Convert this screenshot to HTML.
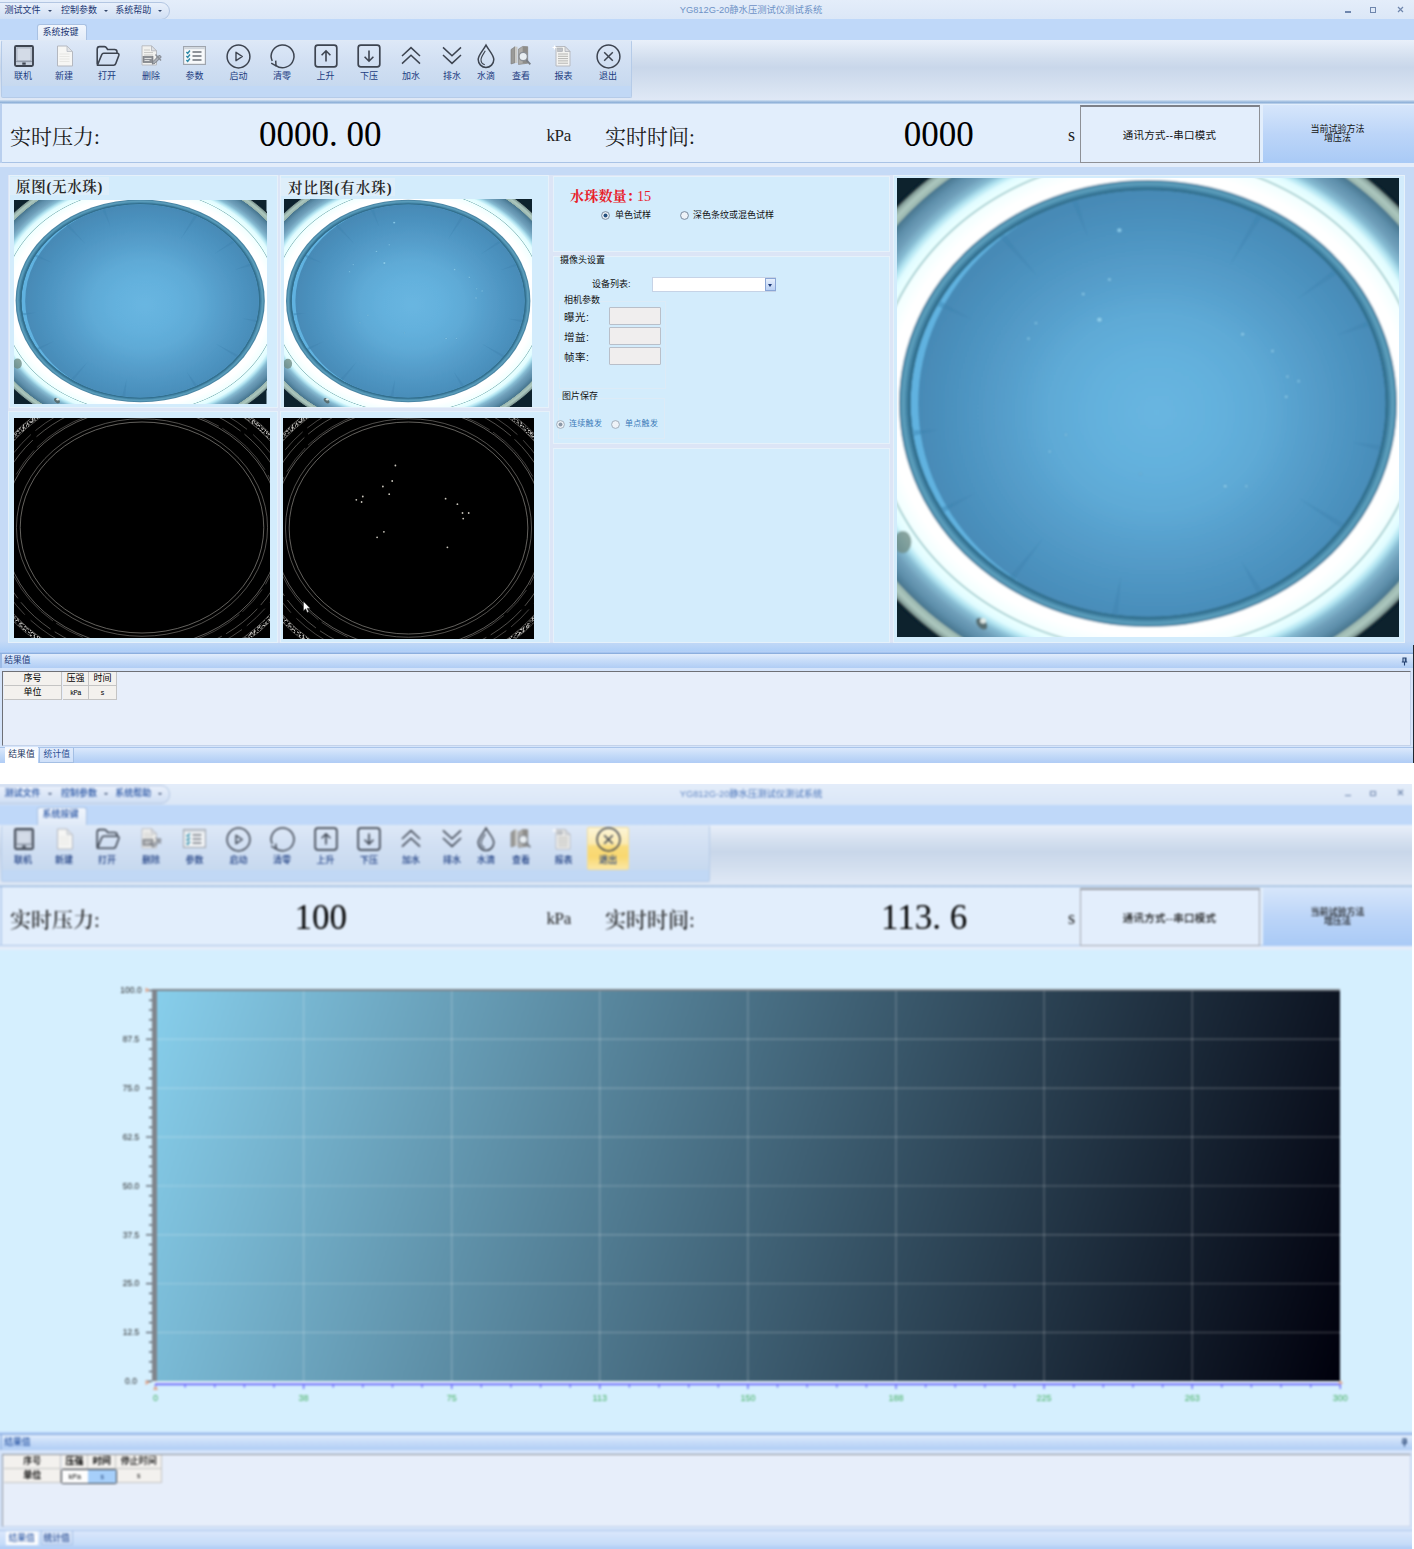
<!DOCTYPE html>
<html lang="zh"><head><meta charset="utf-8"><title>YG812G-20静水压测试仪测试系统</title>
<style>
html,body{margin:0;padding:0;background:#fff}
body{width:1414px;height:1549px;position:relative;overflow:hidden;font-family:"Liberation Sans","Noto Sans CJK SC",sans-serif;font-size:9px;color:#000}
.a{position:absolute}
.win{position:absolute;left:0;width:1414px;overflow:hidden}
.t{position:absolute;white-space:nowrap;line-height:1}
.c{transform:translateX(-50%)}
.lbl{position:absolute;white-space:nowrap;line-height:1;font-size:9px;color:#1c3c80;transform:translateX(-50%)}
.ser{font-family:"Liberation Serif","Noto Serif CJK SC",serif}
.pan{position:absolute;background:#d3ecfc;border:1px solid #e6f1fa;box-sizing:border-box}
.cell{position:absolute;box-sizing:border-box;background:#f3f1ee;border-right:1px solid #c4c4c4;border-bottom:1px solid #c4c4c4;text-align:center;line-height:13px;font-size:9px;white-space:nowrap;overflow:hidden}
svg{position:absolute;overflow:visible}
.w2 .t,.w2 .lbl,.w2 .cell{font-weight:500}
.w2 .n{font-weight:400}
</style></head><body>
<div class="win" style="top:0;height:763px">
<div class="a" style="left:-20px;top:-20px;width:1454px;height:39px;background:linear-gradient(#e4edfa 20px,#dbe7f7)"></div>
<div class="a" style="left:-12px;top:1.5px;width:180px;height:16px;border:1px solid #b3c6e2;border-radius:9px;background:linear-gradient(#e9f0fb,#d0dff4)"></div>
<div class="t" style="left:4.5px;top:5.8px;font-size:9px;color:#1a3572">测试文件</div>
<div class="t" style="left:61px;top:5.8px;font-size:9px;color:#1a3572">控制参数</div>
<div class="t" style="left:115.3px;top:5.8px;font-size:9px;color:#1a3572">系统帮助</div>
<div class="a" style="left:47.5px;top:9.8px;width:0;height:0;border-left:2.2px solid transparent;border-right:2.2px solid transparent;border-top:2.5px solid #33466b"></div>
<div class="a" style="left:103.5px;top:9.8px;width:0;height:0;border-left:2.2px solid transparent;border-right:2.2px solid transparent;border-top:2.5px solid #33466b"></div>
<div class="a" style="left:158px;top:9.8px;width:0;height:0;border-left:2.2px solid transparent;border-right:2.2px solid transparent;border-top:2.5px solid #33466b"></div>
<div class="t c" style="left:751px;top:6.3px;font-size:9.3px;color:#6e92c6">YG812G-20静水压测试仪测试系统</div>
<div class="a" style="left:1345px;top:11.3px;width:5.5px;height:1.5px;background:#6f86ad"></div>
<div class="a" style="left:1370px;top:7.3px;width:4px;height:3.5px;border:1px solid #6f86ad;border-top-width:1.5px"></div>
<svg style="left:1396.500px;top:6.1px" width="7" height="7" viewBox="0 0 7 7"><path d="M1 1l5 5M6 1L1 6" stroke="#6f86ad" stroke-width="1.200"/></svg>
<div class="a" style="left:-20px;top:19px;width:1454px;height:22px;background:#bfd8f9"></div>
<div class="a" style="left:37px;top:24px;width:50px;height:17px;box-sizing:border-box;border:1px solid #a9c1e2;border-bottom:none;border-radius:3px 3px 0 0;background:linear-gradient(#f1f6fd,#e0eaf8)"></div>
<div class="t c" style="left:60.5px;top:27.5px;font-size:9px;color:#1a3572">系统按键</div>
<div class="a" style="left:-20px;top:40px;width:1454px;height:61px;background:linear-gradient(#e9f0fa 0%,#d2deee 30%,#c9d7ea 45%,#d3dfef 70%,#e0e9f6 100%)"></div>
<div class="a" style="left:1px;top:40px;width:631px;height:58px;box-sizing:border-box;border:1px solid #b5cbe8;border-top-color:#dfe9f6;border-radius:2px;background:linear-gradient(#dde8f7 0%,#d2e0f3 35%,#c7d9ef 80%,#c1d8f5 81%,#c1d8f5 100%)"></div>
<svg style="left:13.800px;top:45.3px" width="20" height="22" viewBox="0 0 20 22"><rect x="1" y="1" width="18" height="20" rx="1.200" fill="#c5cfdd" stroke="#3d4450" stroke-width="1.900"/><rect x="3" y="3" width="14" height="12.800" fill="#d3dbe7" stroke="#8a93a3" stroke-width=".5"/><path d="M2 16.600h16" stroke="#7c8595" stroke-width=".8"/><rect x="8.300" y="17.500" width="3.400" height="2.200" fill="#3d4450"/></svg>
<svg style="left:56.3px;top:45px" width="18" height="22" viewBox="0 0 18 22"><path d="M1.5 1h9.5l5.5 5.5V21h-15z" fill="#f6f6f4" stroke="#b4b8c0" stroke-width="1"/><path d="M11 1v5.5h5.5z" fill="#e2e4e8" stroke="#b8bcc4" stroke-width=".8"/><path d="M3.5 9h10M3.5 11.5h10M3.5 14h10M3.5 16.5h10" stroke="#e3e3e0" stroke-width=".8"/></svg>
<svg style="left:95px;top:45px" width="26" height="22" viewBox="0 0 26 22"><path d="M2.2 19.5V4.2c0-1.6.9-2.6 2.4-2.6h4.8c1.2 0 1.7.5 2.4 1.6l.8 1.3h7c1.5 0 2.4.9 2.4 2.3v1.6" fill="none" stroke="#3d4450" stroke-width="1.6"/><path d="M2.4 20.3l4.3-10.6c.4-1 1-1.4 2-1.4h13.6c1.4 0 1.9.9 1.5 2.1l-3 8.2c-.4 1.2-1 1.7-2.2 1.7z" fill="none" stroke="#3d4450" stroke-width="1.6" stroke-linejoin="round"/></svg>
<svg style="left:141px;top:45px" width="21" height="21" viewBox="0 0 21 21"><path d="M1 .8h9.5l5 5V20H1z" fill="#f1f1ef" stroke="#b9bcc2" stroke-width="1"/><path d="M10.5 .8v5h5z" fill="#dfe1e5" stroke="#b0b4bb" stroke-width=".8"/><path d="M3 5h6M3 7.5h9M3 10h9" stroke="#c8c8c6" stroke-width="1"/><rect x="2" y="11.5" width="10" height="6" fill="#8c8f95" stroke="#6d7076" stroke-width=".6"/><path d="M3.5 13.5h7M3.5 15.5h5" stroke="#e6e6e6" stroke-width=".9"/><path d="M12 16.5l6.5-6.5 1.8 2-6.3 6.3-2.8.8z" fill="#a9aeb6" stroke="#6f747c" stroke-width=".8"/><path d="M14.5 9.5l5.5 6" stroke="#8b9098" stroke-width="1.4"/></svg>
<svg style="left:183px;top:46px" width="23" height="19" viewBox="0 0 23 19"><rect x=".6" y=".6" width="21.8" height="17.8" fill="#f7f9fb" stroke="#9fa5ae" stroke-width="1.2"/><rect x="1.2" y="1.2" width="20.6" height="2" fill="#cfd5dd"/><path d="M3.4 6l1.3 1.4 2.2-2.9M3.4 10l1.3 1.4 2.2-2.9M3.4 14l1.3 1.4 2.2-2.9" fill="none" stroke="#2f8aa8" stroke-width="1.5"/><path d="M9.5 6h9M9.5 10h9M9.5 14h9" stroke="#6c727b" stroke-width="1.3"/></svg>
<svg style="left:226px;top:43.5px" width="25" height="25" viewBox="0 0 25 25"><circle cx="12.5" cy="12.5" r="11.4" fill="none" stroke="#3d4450" stroke-width="1.5"/><path d="M10 8.3l6.3 4.2-6.3 4.2z" fill="none" stroke="#3d4450" stroke-width="1.4" stroke-linejoin="round"/></svg>
<svg style="left:269.5px;top:43.5px" width="25" height="25" viewBox="0 0 25 25"><path d="M5.6 21.3A11.4 11.4 0 1 0 2.2 17" fill="none" stroke="#3d4450" stroke-width="1.5"/><path d="M1.2 19.2l4.8 2.6-.3-5.2" fill="none" stroke="#3d4450" stroke-width="1.5" stroke-linejoin="round"/></svg>
<svg style="left:313.5px;top:44px" width="24" height="24" viewBox="0 0 24 24"><rect x="1.2" y="1.2" width="21.6" height="21.6" rx="2.6" fill="none" stroke="#3d4450" stroke-width="1.7"/><path d="M12 17.5V7M7.6 11.2L12 6.8l4.4 4.4" fill="none" stroke="#3d4450" stroke-width="1.6"/></svg>
<svg style="left:357px;top:44px" width="24" height="24" viewBox="0 0 24 24"><rect x="1.2" y="1.2" width="21.6" height="21.6" rx="2.6" fill="none" stroke="#3d4450" stroke-width="1.7"/><path d="M12 6.5V17M7.6 12.8L12 17.2l4.4-4.4" fill="none" stroke="#3d4450" stroke-width="1.6"/></svg>
<svg style="left:401px;top:46px" width="20" height="19" viewBox="0 0 20 19"><path d="M1 10L10 1.6 19 10M1 17.6L10 9.2l9 8.4" fill="none" stroke="#3d4450" stroke-width="1.5"/></svg>
<svg style="left:442px;top:46px" width="20" height="19" viewBox="0 0 20 19"><path d="M1 1.4L10 9.8 19 1.4M1 9L10 17.4 19 9" fill="none" stroke="#3d4450" stroke-width="1.5"/></svg>
<svg style="left:477px;top:44px" width="18" height="24" viewBox="0 0 18 24"><path d="M9 1.2C6.2 6.4 1.2 11 1.2 15.6a7.8 7.8 0 0 0 15.6 0C16.800 11 11.8 6.400 9 1.200z" fill="none" stroke="#3d4450" stroke-width="1.5"/><path d="M8.300 6.800C6.300 10.200 4 12.900 4 15.800c0 2.500 1.500 4.400 3.800 5" fill="none" stroke="#3d4450" stroke-width="1.100"/></svg>
<svg style="left:510px;top:44.5px" width="22" height="22" viewBox="0 0 22 22"><path d="M1 4.500l4-2.800v16l-4 1.300z" fill="#9a9a98" stroke="#7b7b79" stroke-width=".6"/><path d="M5 1.700h2.500v16.300H5z" fill="#c9c9c6"/><path d="M8.500 4l4.200-2.600 5 .3v16.500l-9.200 1.300z" fill="#aeadaa" stroke="#80807d" stroke-width=".6"/><path d="M12.700 1.400l5 .3v16.500h-5z" fill="#8d8c89"/><circle cx="13.200" cy="11.500" r="4.200" fill="#e8eef2" stroke="#8a8f96" stroke-width="1.300"/><path d="M16.300 14.800l4 4.500" stroke="#777c84" stroke-width="1.800"/></svg>
<svg style="left:553px;top:45px" width="19" height="22" viewBox="0 0 19 22"><path d="M3 1.500h9l5 5V21H3z" fill="#f3f3f1" stroke="#b7bac0" stroke-width="1"/><path d="M12 1.500v5h5z" fill="#dcdee2" stroke="#aeb2b9" stroke-width=".8"/><rect x="4.600" y="3" width="5" height="3.600" fill="#bfc2c7" stroke="#9fa3a9" stroke-width=".5"/><path d="M5 9h10M5 11.300h10M5 13.600h10M5 15.900h10M5 18.200h10" stroke="#b4b4b1" stroke-width="1"/><path d="M1.500 .5v4M-.5 2.500h4" stroke="#fff" stroke-width="1.200"/></svg>
<svg style="left:595.5px;top:43.5px" width="25" height="25" viewBox="0 0 25 25"><circle cx="12.500" cy="12.500" r="11.400" fill="none" stroke="#3d4450" stroke-width="1.500"/><path d="M8.200 8.200l8.600 8.600M16.800 8.200l-8.600 8.600" stroke="#3d4450" stroke-width="1.500"/></svg>
<div class="lbl" style="left:23px;top:71.5px">联机</div>
<div class="lbl" style="left:64px;top:71.5px">新建</div>
<div class="lbl" style="left:107px;top:71.5px">打开</div>
<div class="lbl" style="left:151px;top:71.5px">删除</div>
<div class="lbl" style="left:194.5px;top:71.5px">参数</div>
<div class="lbl" style="left:238.5px;top:71.5px">启动</div>
<div class="lbl" style="left:282px;top:71.5px">清零</div>
<div class="lbl" style="left:325.5px;top:71.5px">上升</div>
<div class="lbl" style="left:369px;top:71.5px">下压</div>
<div class="lbl" style="left:411px;top:71.5px">加水</div>
<div class="lbl" style="left:452px;top:71.5px">排水</div>
<div class="lbl" style="left:486px;top:71.5px">水滴</div>
<div class="lbl" style="left:521px;top:71.5px">查看</div>
<div class="lbl" style="left:563.5px;top:71.5px">报表</div>
<div class="lbl" style="left:608px;top:71.5px">退出</div>
<div class="a" style="left:-20px;top:100px;width:1454px;height:4px;background:linear-gradient(#d0e0f2,#8fb1d8 60%,#c5d8ef)"></div>
<div class="a" style="left:-20px;top:104px;width:1454px;height:59px;background:#e2eefc;border-bottom:1px solid #a9c3e6;box-sizing:border-box"></div><div class="a" style="left:0;top:104px;width:2px;height:59px;background:#b9cfee"></div>
<div class="t ser" style="left:10px;top:126.5px;font-size:21px;color:#1a1a1a">实时压力:</div>
<div class="t ser" style="left:259px;top:116.5px;font-size:35px;color:#000">0000<span style="display:inline-block;width:17.500px">.</span>00</div>
<div class="t ser" style="left:546.500px;top:127px;font-size:17px;letter-spacing:-.400px;color:#222">kPa</div>
<div class="t ser" style="left:605px;top:126.5px;font-size:21px;color:#1a1a1a">实时时间:</div>
<div class="t ser" style="left:903.7px;top:116.5px;font-size:35px;color:#000">0000</div>
<div class="t ser" style="left:1068px;top:126.3px;font-size:18px;color:#222">s</div>
<div class="a" style="left:1080px;top:105px;width:180px;height:58px;box-sizing:border-box;border:1px solid #8e9096;border-top:2px solid #7d8088;background:#e3eefc"></div>
<div class="t c" style="left:1169.5px;top:129.5px;font-size:10.500px;letter-spacing:.250px;color:#111">通讯方式--串口模式</div>
<div class="a" style="left:1263px;top:105px;width:151px;height:58px;background:linear-gradient(#d6e6fb,#bcd5f8 50%,#a9caf6)"></div>
<div class="t c" style="left:1337.500px;top:125px;font-size:9px;color:#111;text-align:center;line-height:9px">当前试验方法<br>增压法</div>
<div class="a" style="left:0;top:163px;width:1414px;height:4px;background:#e4edfa;border-bottom:1px solid #a4bde0"></div>
<div class="a" style="left:0;top:167px;width:1414px;height:484px;background:linear-gradient(#c5daf6 0,#c5daf6 474px,#aecff8 484px)"></div>
<div class="a" style="left:8px;top:175px;width:1397px;height:468px;background:#dce5f6"></div>
<div class="pan" style="left:9px;top:175px;width:269px;height:233px"></div>
<div class="pan" style="left:280px;top:175px;width:269px;height:233px"></div>
<div class="pan" style="left:8px;top:411px;width:270px;height:232px"></div>
<div class="pan" style="left:280px;top:411px;width:270px;height:232px"></div>
<div class="pan" style="left:553px;top:176px;width:337px;height:76px"></div>
<div class="pan" style="left:553px;top:256px;width:337px;height:188px"></div>
<div class="pan" style="left:553px;top:448px;width:337px;height:195px"></div>
<div class="pan" style="left:893px;top:175px;width:512px;height:468px"></div>
<div class="a" style="left:10px;top:177px;width:99px;height:18px;background:#deeefa"></div>
<div class="t ser" style="left:16px;top:179.500px;font-size:14.500px;letter-spacing:.700px;font-weight:600;color:#262626">原图(无水珠)</div>
<div class="a" style="left:281px;top:178px;width:114px;height:18px;background:#deeefa"></div>
<div class="t ser" style="left:288px;top:180.500px;font-size:14.500px;letter-spacing:1px;font-weight:600;color:#262626">对比图(有水珠)</div>
<svg style="left:14px;top:200px;overflow:hidden" width="252.5" height="204" viewBox="0 0 252.5 204">
<defs>
<radialGradient id="gp1" cx=".5" cy=".52" r=".5"><stop offset="0" stop-color="#68b6e1"/><stop offset=".25" stop-color="#64b1dd"/><stop offset=".45" stop-color="#5eaad6"/><stop offset=".65" stop-color="#559dca"/><stop offset=".85" stop-color="#4c92bf"/><stop offset="1" stop-color="#478ab6"/></radialGradient>
<radialGradient id="mp1" cx=".5" cy=".5" r=".5"><stop offset="0.7361" stop-color="#ffffff"/><stop offset="0.7732" stop-color="#ffffff"/><stop offset="0.8164" stop-color="#f1ffff"/><stop offset="0.8208" stop-color="#8fbfc2"/><stop offset="0.8253" stop-color="#eaffff"/><stop offset="0.8476" stop-color="#e0fcff"/><stop offset="0.8639" stop-color="#b2e4f1"/><stop offset="0.8810" stop-color="#86bbd2"/><stop offset="0.9033" stop-color="#6f9fba"/><stop offset="0.9294" stop-color="#5d8eaa"/><stop offset="0.9539" stop-color="#48768f"/><stop offset="0.9569" stop-color="#9ab6ae"/><stop offset="0.9740" stop-color="#adc8bf"/><stop offset="0.9896" stop-color="#819b96"/><stop offset="0.9941" stop-color="#1b2c36"/><stop offset="1.0000" stop-color="#0d222d"/></radialGradient>
<filter id="bp1" x="-5%" y="-5%" width="110%" height="110%"><feGaussianBlur stdDeviation="0.45"/></filter>
</defs>
<rect width="252.5" height="204" fill="#0d222d"/>
<g filter="url(#bp1)"><g transform="translate(126.2 100.85) scale(124.6 101.3)">
<circle r="1.345" fill="url(#mp1)"/>
<ellipse cx="-.985" cy=".62" rx=".035" ry=".05" fill="#6f8c86" fill-opacity=".8"/>
<ellipse cx="-.668" cy=".985" rx=".018" ry=".03" fill="#596e72" transform="rotate(-35 -.668 .985)"/>
<circle cx="-.662" cy=".972" r=".012" fill="#dfe9e6"/>
<circle r="1" fill="#4a86a5"/>
<circle r=".990" fill="#5a9cba"/>
<circle r=".976" fill="#4688a9"/>
<circle r=".966" fill="#33708f"/>
<clipPath id="dp1"><circle r=".953"/></clipPath>
<g clip-path="url(#dp1)"><circle r=".953" fill="#60b2e0"/><ellipse cx=".035" cy="0" rx=".958" ry=".975" fill="url(#gp1)"/></g>
<path d="M-0.833 -0.457L-0.706 -0.376L-0.844 -0.435z" fill="#3f83b0" fill-opacity=".45"/>
<path d="M-0.575 -0.756L-0.443 -0.567L-0.594 -0.741z" fill="#3f83b0" fill-opacity=".45"/>
<path d="M-0.282 -0.907L-0.241 -0.742L-0.305 -0.900z" fill="#3f83b0" fill-opacity=".45"/>
<path d="M0.457 -0.833L0.329 -0.618L0.435 -0.844z" fill="#3f83b0" fill-opacity=".45"/>
<path d="M0.756 -0.575L0.599 -0.468L0.741 -0.594z" fill="#3f83b0" fill-opacity=".45"/>
<path d="M0.885 -0.345L0.760 -0.307L0.876 -0.367z" fill="#3f83b0" fill-opacity=".45"/>
<path d="M0.927 0.209L0.822 0.175L0.932 0.186z" fill="#3f83b0" fill-opacity=".45"/>
<path d="M0.771 0.555L0.606 0.424L0.785 0.535z" fill="#3f83b0" fill-opacity=".45"/>
<path d="M0.435 0.844L0.376 0.706L0.457 0.833z" fill="#3f83b0" fill-opacity=".45"/>
<path d="M-0.144 0.939L-0.109 0.772L-0.120 0.942z" fill="#3f83b0" fill-opacity=".45"/>
<path d="M-0.555 0.771L-0.424 0.606L-0.535 0.785z" fill="#3f83b0" fill-opacity=".45"/>
<path d="M-0.829 0.465L-0.693 0.400L-0.817 0.485z" fill="#3f83b0" fill-opacity=".45"/>
<path d="M-0.942 0.120L-0.842 0.118L-0.939 0.144z" fill="#3f83b0" fill-opacity=".45"/>
</g></g></svg>
<svg style="left:284px;top:199px;overflow:hidden" width="248" height="208" viewBox="0 0 248 208">
<defs>
<radialGradient id="gp2" cx=".5" cy=".52" r=".5"><stop offset="0" stop-color="#68b6e1"/><stop offset=".25" stop-color="#64b1dd"/><stop offset=".45" stop-color="#5eaad6"/><stop offset=".65" stop-color="#559dca"/><stop offset=".85" stop-color="#4c92bf"/><stop offset="1" stop-color="#478ab6"/></radialGradient>
<radialGradient id="mp2" cx=".5" cy=".5" r=".5"><stop offset="0.7361" stop-color="#ffffff"/><stop offset="0.7732" stop-color="#ffffff"/><stop offset="0.8164" stop-color="#f1ffff"/><stop offset="0.8208" stop-color="#8fbfc2"/><stop offset="0.8253" stop-color="#eaffff"/><stop offset="0.8476" stop-color="#e0fcff"/><stop offset="0.8639" stop-color="#b2e4f1"/><stop offset="0.8810" stop-color="#86bbd2"/><stop offset="0.9033" stop-color="#6f9fba"/><stop offset="0.9294" stop-color="#5d8eaa"/><stop offset="0.9539" stop-color="#48768f"/><stop offset="0.9569" stop-color="#9ab6ae"/><stop offset="0.9740" stop-color="#adc8bf"/><stop offset="0.9896" stop-color="#819b96"/><stop offset="0.9941" stop-color="#1b2c36"/><stop offset="1.0000" stop-color="#0d222d"/></radialGradient>
<filter id="bp2" x="-5%" y="-5%" width="110%" height="110%"><feGaussianBlur stdDeviation="0.45"/></filter>
</defs>
<rect width="248" height="208" fill="#0d222d"/>
<g filter="url(#bp2)"><g transform="translate(124.2 102) scale(122.2 101.2)">
<circle r="1.345" fill="url(#mp2)"/>
<ellipse cx="-.985" cy=".62" rx=".035" ry=".05" fill="#6f8c86" fill-opacity=".8"/>
<ellipse cx="-.668" cy=".985" rx=".018" ry=".03" fill="#596e72" transform="rotate(-35 -.668 .985)"/>
<circle cx="-.662" cy=".972" r=".012" fill="#dfe9e6"/>
<circle r="1" fill="#4a86a5"/>
<circle r=".990" fill="#5a9cba"/>
<circle r=".976" fill="#4688a9"/>
<circle r=".966" fill="#33708f"/>
<clipPath id="dp2"><circle r=".953"/></clipPath>
<g clip-path="url(#dp2)"><circle r=".953" fill="#60b2e0"/><ellipse cx=".035" cy="0" rx=".958" ry=".975" fill="url(#gp2)"/></g>
<path d="M-0.833 -0.457L-0.706 -0.376L-0.844 -0.435z" fill="#3f83b0" fill-opacity=".45"/>
<path d="M-0.575 -0.756L-0.443 -0.567L-0.594 -0.741z" fill="#3f83b0" fill-opacity=".45"/>
<path d="M-0.282 -0.907L-0.241 -0.742L-0.305 -0.900z" fill="#3f83b0" fill-opacity=".45"/>
<path d="M0.457 -0.833L0.329 -0.618L0.435 -0.844z" fill="#3f83b0" fill-opacity=".45"/>
<path d="M0.756 -0.575L0.599 -0.468L0.741 -0.594z" fill="#3f83b0" fill-opacity=".45"/>
<path d="M0.885 -0.345L0.760 -0.307L0.876 -0.367z" fill="#3f83b0" fill-opacity=".45"/>
<path d="M0.927 0.209L0.822 0.175L0.932 0.186z" fill="#3f83b0" fill-opacity=".45"/>
<path d="M0.771 0.555L0.606 0.424L0.785 0.535z" fill="#3f83b0" fill-opacity=".45"/>
<path d="M0.435 0.844L0.376 0.706L0.457 0.833z" fill="#3f83b0" fill-opacity=".45"/>
<path d="M-0.144 0.939L-0.109 0.772L-0.120 0.942z" fill="#3f83b0" fill-opacity=".45"/>
<path d="M-0.555 0.771L-0.424 0.606L-0.535 0.785z" fill="#3f83b0" fill-opacity=".45"/>
<path d="M-0.829 0.465L-0.693 0.400L-0.817 0.485z" fill="#3f83b0" fill-opacity=".45"/>
<path d="M-0.942 0.120L-0.842 0.118L-0.939 0.144z" fill="#3f83b0" fill-opacity=".45"/>
<circle cx="-0.115" cy="-0.775" r="0.009" fill="#8fd0ee" stroke="#4e95c0" stroke-width=".003"/>
<circle cx="-0.155" cy="-0.555" r="0.007" fill="#8fd0ee" stroke="#4e95c0" stroke-width=".003"/>
<circle cx="-0.26" cy="-0.49" r="0.007" fill="#8fd0ee" stroke="#4e95c0" stroke-width=".003"/>
<circle cx="-0.195" cy="-0.375" r="0.011" fill="#8fd0ee" stroke="#4e95c0" stroke-width=".003"/>
<circle cx="-0.45" cy="-0.36" r="0.006" fill="#8fd0ee" stroke="#4e95c0" stroke-width=".003"/>
<circle cx="-0.48" cy="-0.29" r="0.006" fill="#8fd0ee" stroke="#4e95c0" stroke-width=".003"/>
<circle cx="0.38" cy="-0.31" r="0.008" fill="#8fd0ee" stroke="#4e95c0" stroke-width=".003"/>
<circle cx="0.5" cy="-0.235" r="0.007" fill="#8fd0ee" stroke="#4e95c0" stroke-width=".003"/>
<circle cx="0.56" cy="-0.12" r="0.006" fill="#8fd0ee" stroke="#4e95c0" stroke-width=".003"/>
<circle cx="0.605" cy="-0.1" r="0.006" fill="#8fd0ee" stroke="#4e95c0" stroke-width=".003"/>
<circle cx="0.555" cy="-0.03" r="0.007" fill="#8fd0ee" stroke="#4e95c0" stroke-width=".003"/>
<circle cx="-0.33" cy="0.14" r="0.006" fill="#8fd0ee" stroke="#4e95c0" stroke-width=".003"/>
<circle cx="-0.395" cy="0.215" r="0.006" fill="#8fd0ee" stroke="#4e95c0" stroke-width=".003"/>
<circle cx="-0.03" cy="0.315" r="0.005" fill="#8fd0ee" stroke="#4e95c0" stroke-width=".003"/>
<circle cx="0.31" cy="0.37" r="0.008" fill="#8fd0ee" stroke="#4e95c0" stroke-width=".003"/>
<circle cx="0.395" cy="0.37" r="0.006" fill="#8fd0ee" stroke="#4e95c0" stroke-width=".003"/>
</g></g></svg>
<svg style="left:897px;top:178px;overflow:hidden" width="502" height="459" viewBox="0 0 502 459">
<defs>
<radialGradient id="gp3" cx=".5" cy=".52" r=".5"><stop offset="0" stop-color="#68b6e1"/><stop offset=".25" stop-color="#64b1dd"/><stop offset=".45" stop-color="#5eaad6"/><stop offset=".65" stop-color="#559dca"/><stop offset=".85" stop-color="#4c92bf"/><stop offset="1" stop-color="#478ab6"/></radialGradient>
<radialGradient id="mp3" cx=".5" cy=".5" r=".5"><stop offset="0.7361" stop-color="#ffffff"/><stop offset="0.7732" stop-color="#ffffff"/><stop offset="0.8164" stop-color="#f1ffff"/><stop offset="0.8208" stop-color="#8fbfc2"/><stop offset="0.8253" stop-color="#eaffff"/><stop offset="0.8476" stop-color="#e0fcff"/><stop offset="0.8639" stop-color="#b2e4f1"/><stop offset="0.8810" stop-color="#86bbd2"/><stop offset="0.9033" stop-color="#6f9fba"/><stop offset="0.9294" stop-color="#5d8eaa"/><stop offset="0.9539" stop-color="#48768f"/><stop offset="0.9569" stop-color="#9ab6ae"/><stop offset="0.9740" stop-color="#adc8bf"/><stop offset="0.9896" stop-color="#819b96"/><stop offset="0.9941" stop-color="#1b2c36"/><stop offset="1.0000" stop-color="#0d222d"/></radialGradient>
<filter id="bp3" x="-5%" y="-5%" width="110%" height="110%"><feGaussianBlur stdDeviation="0.8"/></filter>
</defs>
<rect width="502" height="459" fill="#0d222d"/>
<g filter="url(#bp3)"><g transform="translate(251 225.5) scale(249 223.5)">
<circle r="1.345" fill="url(#mp3)"/>
<ellipse cx="-.985" cy=".62" rx=".035" ry=".05" fill="#6f8c86" fill-opacity=".8"/>
<ellipse cx="-.668" cy=".985" rx=".018" ry=".03" fill="#596e72" transform="rotate(-35 -.668 .985)"/>
<circle cx="-.662" cy=".972" r=".012" fill="#dfe9e6"/>
<circle r="1" fill="#4a86a5"/>
<circle r=".990" fill="#5a9cba"/>
<circle r=".976" fill="#4688a9"/>
<circle r=".966" fill="#33708f"/>
<clipPath id="dp3"><circle r=".953"/></clipPath>
<g clip-path="url(#dp3)"><circle r=".953" fill="#60b2e0"/><ellipse cx=".035" cy="0" rx=".958" ry=".975" fill="url(#gp3)"/></g>
<path d="M-0.833 -0.457L-0.706 -0.376L-0.844 -0.435z" fill="#3f83b0" fill-opacity=".45"/>
<path d="M-0.575 -0.756L-0.443 -0.567L-0.594 -0.741z" fill="#3f83b0" fill-opacity=".45"/>
<path d="M-0.282 -0.907L-0.241 -0.742L-0.305 -0.900z" fill="#3f83b0" fill-opacity=".45"/>
<path d="M0.457 -0.833L0.329 -0.618L0.435 -0.844z" fill="#3f83b0" fill-opacity=".45"/>
<path d="M0.756 -0.575L0.599 -0.468L0.741 -0.594z" fill="#3f83b0" fill-opacity=".45"/>
<path d="M0.885 -0.345L0.760 -0.307L0.876 -0.367z" fill="#3f83b0" fill-opacity=".45"/>
<path d="M0.927 0.209L0.822 0.175L0.932 0.186z" fill="#3f83b0" fill-opacity=".45"/>
<path d="M0.771 0.555L0.606 0.424L0.785 0.535z" fill="#3f83b0" fill-opacity=".45"/>
<path d="M0.435 0.844L0.376 0.706L0.457 0.833z" fill="#3f83b0" fill-opacity=".45"/>
<path d="M-0.144 0.939L-0.109 0.772L-0.120 0.942z" fill="#3f83b0" fill-opacity=".45"/>
<path d="M-0.555 0.771L-0.424 0.606L-0.535 0.785z" fill="#3f83b0" fill-opacity=".45"/>
<path d="M-0.829 0.465L-0.693 0.400L-0.817 0.485z" fill="#3f83b0" fill-opacity=".45"/>
<path d="M-0.942 0.120L-0.842 0.118L-0.939 0.144z" fill="#3f83b0" fill-opacity=".45"/>
<circle cx="-0.115" cy="-0.775" r="0.009" fill="#8fd0ee" stroke="#4e95c0" stroke-width=".003"/>
<circle cx="-0.155" cy="-0.555" r="0.007" fill="#8fd0ee" stroke="#4e95c0" stroke-width=".003"/>
<circle cx="-0.26" cy="-0.49" r="0.007" fill="#8fd0ee" stroke="#4e95c0" stroke-width=".003"/>
<circle cx="-0.195" cy="-0.375" r="0.011" fill="#8fd0ee" stroke="#4e95c0" stroke-width=".003"/>
<circle cx="-0.45" cy="-0.36" r="0.006" fill="#8fd0ee" stroke="#4e95c0" stroke-width=".003"/>
<circle cx="-0.48" cy="-0.29" r="0.006" fill="#8fd0ee" stroke="#4e95c0" stroke-width=".003"/>
<circle cx="0.38" cy="-0.31" r="0.008" fill="#8fd0ee" stroke="#4e95c0" stroke-width=".003"/>
<circle cx="0.5" cy="-0.235" r="0.007" fill="#8fd0ee" stroke="#4e95c0" stroke-width=".003"/>
<circle cx="0.56" cy="-0.12" r="0.006" fill="#8fd0ee" stroke="#4e95c0" stroke-width=".003"/>
<circle cx="0.605" cy="-0.1" r="0.006" fill="#8fd0ee" stroke="#4e95c0" stroke-width=".003"/>
<circle cx="0.555" cy="-0.03" r="0.007" fill="#8fd0ee" stroke="#4e95c0" stroke-width=".003"/>
<circle cx="-0.33" cy="0.14" r="0.006" fill="#8fd0ee" stroke="#4e95c0" stroke-width=".003"/>
<circle cx="-0.395" cy="0.215" r="0.006" fill="#8fd0ee" stroke="#4e95c0" stroke-width=".003"/>
<circle cx="-0.03" cy="0.315" r="0.005" fill="#8fd0ee" stroke="#4e95c0" stroke-width=".003"/>
<circle cx="0.31" cy="0.37" r="0.008" fill="#8fd0ee" stroke="#4e95c0" stroke-width=".003"/>
<circle cx="0.395" cy="0.37" r="0.006" fill="#8fd0ee" stroke="#4e95c0" stroke-width=".003"/>
</g></g></svg>
<svg style="left:14px;top:418px;overflow:hidden" width="256" height="220" viewBox="0 0 256 220">
<defs><filter id="ne1" x="0" y="0" width="100%" height="100%"><feTurbulence type="fractalNoise" baseFrequency=".55" numOctaves="2" seed="7"/><feColorMatrix values="0 0 0 0 .50  0 0 0 0 .49  0 0 0 0 .47  2.6 2.6 0 0 -2.3"/></filter>
<clipPath id="ce1"><path clip-rule="evenodd" d="M-1.335 0a1.335 1.335 0 1 0 2.67 0a1.335 1.335 0 1 0 -2.67 0zM-1.292 0a1.292 1.292 0 1 0 2.584 0a1.292 1.292 0 1 0 -2.584 0z" transform="translate(128.0 109.5) scale(125.8 109.0)"/></clipPath></defs>
<rect width="256" height="220" fill="#000"/>
<g clip-path="url(#ce1)"><rect width="256" height="220" filter="url(#ne1)"/></g>
<g transform="translate(128.0 109.5) scale(125.8 109.0)" fill="none" stroke="#8a8782" stroke-width=".85">
<circle r="0.968" stroke-opacity="0.85" vector-effect="non-scaling-stroke"/>
<circle r="0.998" stroke-opacity="0.7" vector-effect="non-scaling-stroke"/>
<circle r="1.098" stroke-opacity="0.8" vector-effect="non-scaling-stroke"/>
<circle r="1.112" stroke-opacity="0.55" vector-effect="non-scaling-stroke" stroke-dasharray="60 6 30 4"/>
<circle r="1.182" stroke-opacity="0.7" vector-effect="non-scaling-stroke" stroke-dasharray="40 5"/>
<circle r="1.228" stroke-opacity="0.6" vector-effect="non-scaling-stroke" stroke-dasharray="25 6 50 8"/>
<circle r="1.292" stroke-opacity="0.6" vector-effect="non-scaling-stroke"/>
<circle r="1.336" stroke-opacity="0.5" vector-effect="non-scaling-stroke"/>
</g>
</svg>
<svg style="left:283px;top:418px;overflow:hidden" width="251" height="221" viewBox="0 0 251 221">
<defs><filter id="ne2" x="0" y="0" width="100%" height="100%"><feTurbulence type="fractalNoise" baseFrequency=".55" numOctaves="2" seed="7"/><feColorMatrix values="0 0 0 0 .50  0 0 0 0 .49  0 0 0 0 .47  2.6 2.6 0 0 -2.3"/></filter>
<clipPath id="ce2"><path clip-rule="evenodd" d="M-1.335 0a1.335 1.335 0 1 0 2.67 0a1.335 1.335 0 1 0 -2.67 0zM-1.292 0a1.292 1.292 0 1 0 2.584 0a1.292 1.292 0 1 0 -2.584 0z" transform="translate(125.5 110.0) scale(123.3 109.5)"/></clipPath></defs>
<rect width="251" height="221" fill="#000"/>
<g clip-path="url(#ce2)"><rect width="251" height="221" filter="url(#ne2)"/></g>
<g transform="translate(125.5 110.0) scale(123.3 109.5)" fill="none" stroke="#8a8782" stroke-width=".85">
<circle r="0.968" stroke-opacity="0.85" vector-effect="non-scaling-stroke"/>
<circle r="0.998" stroke-opacity="0.7" vector-effect="non-scaling-stroke"/>
<circle r="1.098" stroke-opacity="0.8" vector-effect="non-scaling-stroke"/>
<circle r="1.112" stroke-opacity="0.55" vector-effect="non-scaling-stroke" stroke-dasharray="60 6 30 4"/>
<circle r="1.182" stroke-opacity="0.7" vector-effect="non-scaling-stroke" stroke-dasharray="40 5"/>
<circle r="1.228" stroke-opacity="0.6" vector-effect="non-scaling-stroke" stroke-dasharray="25 6 50 8"/>
<circle r="1.292" stroke-opacity="0.6" vector-effect="non-scaling-stroke"/>
<circle r="1.336" stroke-opacity="0.5" vector-effect="non-scaling-stroke"/>
</g>
<circle cx="112.4" cy="47.5" r=".9" fill="#c9c5bb"/>
<circle cx="109.2" cy="63.0" r=".9" fill="#c9c5bb"/>
<circle cx="99.9" cy="68.5" r=".9" fill="#c9c5bb"/>
<circle cx="106.2" cy="76.2" r=".9" fill="#c9c5bb"/>
<circle cx="79.8" cy="78.5" r=".9" fill="#c9c5bb"/>
<circle cx="73.3" cy="81.8" r=".9" fill="#c9c5bb"/>
<circle cx="78.6" cy="84.0" r=".9" fill="#c9c5bb"/>
<circle cx="162.6" cy="80.7" r=".9" fill="#c9c5bb"/>
<circle cx="174.4" cy="86.2" r=".9" fill="#c9c5bb"/>
<circle cx="179.5" cy="95.0" r=".9" fill="#c9c5bb"/>
<circle cx="185.7" cy="95.0" r=".9" fill="#c9c5bb"/>
<circle cx="180.2" cy="100.6" r=".9" fill="#c9c5bb"/>
<circle cx="100.9" cy="113.8" r=".9" fill="#c9c5bb"/>
<circle cx="94.1" cy="119.3" r=".9" fill="#c9c5bb"/>
<circle cx="164.4" cy="129.3" r=".9" fill="#c9c5bb"/>
</svg>
<svg style="left:303px;top:601px" width="8" height="12" viewBox="0 0 8 12"><path d="M.5 .5v9.300l2.200-2 1.600 3.600 1.400-.6-1.600-3.500h3z" fill="#fff" stroke="#333" stroke-width=".5"/></svg>
<div class="t ser" style="left:570px;top:189px;font-size:14.200px;font-weight:bold;color:#e8202a">水珠数量：<span style="font-weight:normal;margin-left:-4px">15</span></div>
<svg style="left:601px;top:211px" width="9" height="9" viewBox="0 0 9 9"><circle cx="4.500" cy="4.500" r="3.900" fill="#eef3f8" stroke="#6d7f94" stroke-width=".9"/><circle cx="4.500" cy="4.500" r="2" fill="#24507e"/></svg>
<div class="t" style="left:615px;top:211px;font-size:9px;color:#111">单色试样</div>
<svg style="left:680px;top:211px" width="9" height="9" viewBox="0 0 9 9"><circle cx="4.500" cy="4.500" r="3.900" fill="#eef3f8" stroke="#6d7f94" stroke-width=".9"/></svg>
<div class="t" style="left:693px;top:211px;font-size:9px;color:#111">深色条纹或混色试样</div>
<div class="t" style="left:560px;top:256px;font-size:9px;color:#111;background:#d3ecfc">摄像头设置</div>
<div class="t" style="left:592px;top:280px;font-size:9px;color:#111">设备列表:</div>
<div class="a" style="left:652px;top:277px;width:124px;height:15px;box-sizing:border-box;border:1px solid #c6d3e6;background:#fff"></div>
<div class="a" style="left:765px;top:278px;width:11px;height:13px;box-sizing:border-box;border:1px solid #8aa6d6;background:linear-gradient(#e6effc,#b9d0f4)"></div>
<div class="a" style="left:768px;top:284px;width:0;height:0;border-left:2.500px solid transparent;border-right:2.500px solid transparent;border-top:3px solid #1e3a78"></div>
<div class="a" style="left:559px;top:301px;width:107px;height:88px;box-sizing:border-box;border:1px solid #dcebf7"></div>
<div class="t" style="left:564px;top:296px;font-size:9px;color:#111;background:#d3ecfc">相机参数</div>
<div class="t" style="left:564px;top:312px;font-size:10.500px;color:#111;letter-spacing:.500px">曝光:</div>
<div class="a" style="left:609px;top:307px;width:52px;height:18px;box-sizing:border-box;border:1px solid #b9bfc9;border-radius:1px;background:#f0eeee"></div>
<div class="t" style="left:564px;top:332px;font-size:10.500px;color:#111;letter-spacing:.500px">增益:</div>
<div class="a" style="left:609px;top:327px;width:52px;height:18px;box-sizing:border-box;border:1px solid #b9bfc9;border-radius:1px;background:#f0eeee"></div>
<div class="t" style="left:564px;top:352px;font-size:10.500px;color:#111;letter-spacing:.500px">帧率:</div>
<div class="a" style="left:609px;top:347px;width:52px;height:18px;box-sizing:border-box;border:1px solid #b9bfc9;border-radius:1px;background:#f0eeee"></div>
<div class="a" style="left:558px;top:398px;width:107px;height:41px;box-sizing:border-box;border:1px solid #dcebf7"></div>
<div class="t" style="left:562px;top:392px;font-size:9px;color:#111;background:#d3ecfc">图片保存</div>
<svg style="left:556px;top:420px" width="9" height="9" viewBox="0 0 9 9"><circle cx="4.500" cy="4.500" r="3.900" fill="#eef3f8" stroke="#9aa7b6" stroke-width=".9"/><circle cx="4.500" cy="4.500" r="2" fill="#8b98a8"/></svg>
<div class="t" style="left:569px;top:420px;font-size:8px;color:#3a79b8;letter-spacing:.300px">连续触发</div>
<svg style="left:611px;top:420px" width="9" height="9" viewBox="0 0 9 9"><circle cx="4.500" cy="4.500" r="3.900" fill="#eef3f8" stroke="#9aa7b6" stroke-width=".9"/></svg>
<div class="t" style="left:625px;top:420px;font-size:8px;color:#3a79b8;letter-spacing:.300px">单点触发</div>
<div class="a" style="left:-20px;top:651.0px;width:1454px;height:3.300px;background:linear-gradient(#bcd5f8,#9fc0ee 60%,#7fa2d2)"></div>
<div class="a" style="left:-20px;top:654.3px;width:1454px;height:13.7px;background:linear-gradient(#e2edfc,#c8ddf9 45%,#b0cdf5)"></div>
<div class="a" style="left:0;top:654.3px;width:2px;height:13.7px;background:#9dbbe6"></div>
<div class="t" style="left:4.200px;top:656.4px;font-size:8.800px;color:#1d3a78">结果值</div>
<svg style="left:1400.500px;top:656.8px" width="7" height="9" viewBox="0 0 7 9"><path d="M2 1h3v4H2zM.8 5h5.400M3.500 5v3.500" fill="none" stroke="#23406f" stroke-width="1.100"/><path d="M4.300 1v4" stroke="#23406f" stroke-width="1"/></svg>
<div class="a" style="left:-20px;top:668.0px;width:1454px;height:80.0px;background:#d5e4fa"></div>
<div class="a" style="left:2px;top:670.5px;width:1408.500px;height:75.0px;box-sizing:border-box;border-top:1.500px solid #6e7076;border-left:1.700px solid #6e7076;border-right:1px solid #c5d3ea;border-bottom:1px solid #c5d3ea;background:#e7eefa"></div>
<div class="cell" style="left:3.7px;top:672.0px;width:58.8px;height:13.8px;line-height:13.3px">序号</div>
<div class="cell" style="left:62.5px;top:672.0px;width:26.9px;height:13.8px;line-height:13.3px">压强</div>
<div class="cell" style="left:89.4px;top:672.0px;width:27.2px;height:13.8px;line-height:13.3px">时间</div>
<div class="cell" style="left:3.7px;top:685.8px;width:58.8px;height:13.8px;line-height:13.3px">单位</div>
<div class="cell" style="left:62.5px;top:685.8px;width:26.9px;height:13.8px;line-height:13.3px"><span style="font-size:7px;font-family:'Liberation Mono',monospace;letter-spacing:-.500px">kPa</span></div>
<div class="cell" style="left:89.4px;top:685.8px;width:27.2px;height:13.8px;line-height:13.3px"><span style="font-size:7px">s</span></div>
<div class="a" style="left:-20px;top:747px;width:1454px;height:15.5px;background:linear-gradient(#dbe8fc,#c3daf8 50%,#b0ccf5 100%);border-top:1px solid #a9c4ea;box-sizing:border-box"></div>
<div class="a" style="left:4.8px;top:747px;width:33.4px;height:15.5px;background:linear-gradient(#f3f7fe,#ffffff 40%)"></div>
<div class="t c" style="left:21.5px;top:750.2px;font-size:8.800px;color:#23365e">结果值</div>
<div class="a" style="left:39.4px;top:747.5px;width:34.8px;height:15.0px;box-sizing:border-box;border:1px solid #a4bfe4;border-top:none;background:linear-gradient(#dfeafb,#cfe0f9)"></div>
<div class="t c" style="left:56.8px;top:750.2px;font-size:8.800px;color:#2c4f93">统计值</div>
<div class="a" style="left:1412.500px;top:645px;width:1.500px;height:118px;background:#1f2730"></div>
</div>
<div class="win" style="top:784px;height:765px;width:1412px"><div class="a w2" style="left:0;top:-784px;width:1414px;height:1549px;filter:blur(1px)">
<div class="a" style="left:-20px;top:763px;width:1454px;height:41.5px;background:linear-gradient(#e4edfa 20px,#dbe7f7)"></div>
<div class="a" style="left:-12px;top:784.5px;width:180px;height:17.5px;border:1px solid #b3c6e2;border-radius:9px;background:linear-gradient(#e9f0fb,#d0dff4)"></div>
<div class="t" style="left:4.5px;top:789px;font-size:9px;color:#2552a2">测试文件</div>
<div class="t" style="left:61px;top:789px;font-size:9px;color:#2552a2">控制参数</div>
<div class="t" style="left:115.3px;top:789px;font-size:9px;color:#2552a2">系统帮助</div>
<div class="a" style="left:47.5px;top:793px;width:0;height:0;border-left:2.2px solid transparent;border-right:2.2px solid transparent;border-top:2.5px solid #33466b"></div>
<div class="a" style="left:103.5px;top:793px;width:0;height:0;border-left:2.2px solid transparent;border-right:2.2px solid transparent;border-top:2.5px solid #33466b"></div>
<div class="a" style="left:158px;top:793px;width:0;height:0;border-left:2.2px solid transparent;border-right:2.2px solid transparent;border-top:2.5px solid #33466b"></div>
<div class="t c" style="left:751px;top:789.5px;font-size:9.3px;color:#6388c4">YG812G-20静水压测试仪测试系统</div>
<div class="a" style="left:1345px;top:794.5px;width:5.5px;height:1.5px;background:#6f86ad"></div>
<div class="a" style="left:1370px;top:790.5px;width:4px;height:3.5px;border:1px solid #6f86ad;border-top-width:1.5px"></div>
<svg style="left:1396.500px;top:789.3px" width="7" height="7" viewBox="0 0 7 7"><path d="M1 1l5 5M6 1L1 6" stroke="#6f86ad" stroke-width="1.200"/></svg>
<div class="a" style="left:-20px;top:804.5px;width:1454px;height:21px;background:#bfd8f9"></div>
<div class="a" style="left:37px;top:807.4px;width:50px;height:17.2px;box-sizing:border-box;border:1px solid #a9c1e2;border-bottom:none;border-radius:3px 3px 0 0;background:linear-gradient(#f1f6fd,#e0eaf8)"></div>
<div class="t c" style="left:60.5px;top:809.8px;font-size:9px;color:#2552a2">系统按键</div>
<div class="a" style="left:-20px;top:824.5px;width:1454px;height:60.5px;background:linear-gradient(#e9f0fa 0%,#d2deee 30%,#c9d7ea 45%,#d3dfef 70%,#e0e9f6 100%)"></div>
<div class="a" style="left:1px;top:824.5px;width:709px;height:57.5px;box-sizing:border-box;border:1px solid #b5cbe8;border-top-color:#dfe9f6;border-radius:2px;background:linear-gradient(#dde8f7 0%,#d2e0f3 35%,#c7d9ef 80%,#c1d8f5 81%,#c1d8f5 100%)"></div>
<div class="a" style="left:587px;top:826.5px;width:42px;height:43px;box-sizing:border-box;border:1px solid #f0dc9c;border-radius:2px;background:linear-gradient(#fdf5d6 0%,#fbeab0 38%,#f9dc7c 45%,#f9d870 70%,#fbe7a4 100%)"></div>
<svg style="left:13.800px;top:828.3px" width="20" height="22" viewBox="0 0 20 22"><rect x="1" y="1" width="18" height="20" rx="1.200" fill="#c5cfdd" stroke="#3d4450" stroke-width="1.900"/><rect x="3" y="3" width="14" height="12.800" fill="#d3dbe7" stroke="#8a93a3" stroke-width=".5"/><path d="M2 16.600h16" stroke="#7c8595" stroke-width=".8"/><rect x="8.300" y="17.500" width="3.400" height="2.200" fill="#3d4450"/></svg>
<svg style="left:56.3px;top:828px" width="18" height="22" viewBox="0 0 18 22"><path d="M1.5 1h9.5l5.5 5.5V21h-15z" fill="#f6f6f4" stroke="#b4b8c0" stroke-width="1"/><path d="M11 1v5.5h5.5z" fill="#e2e4e8" stroke="#b8bcc4" stroke-width=".8"/><path d="M3.5 9h10M3.5 11.5h10M3.5 14h10M3.5 16.5h10" stroke="#e3e3e0" stroke-width=".8"/></svg>
<svg style="left:95px;top:828px" width="26" height="22" viewBox="0 0 26 22"><path d="M2.2 19.5V4.2c0-1.6.9-2.6 2.4-2.6h4.8c1.2 0 1.7.5 2.4 1.6l.8 1.3h7c1.5 0 2.4.9 2.4 2.3v1.6" fill="none" stroke="#3d4450" stroke-width="1.6"/><path d="M2.4 20.3l4.3-10.6c.4-1 1-1.4 2-1.4h13.6c1.4 0 1.9.9 1.5 2.1l-3 8.2c-.4 1.2-1 1.7-2.2 1.7z" fill="none" stroke="#3d4450" stroke-width="1.6" stroke-linejoin="round"/></svg>
<svg style="left:141px;top:828px" width="21" height="21" viewBox="0 0 21 21"><path d="M1 .8h9.5l5 5V20H1z" fill="#f1f1ef" stroke="#b9bcc2" stroke-width="1"/><path d="M10.5 .8v5h5z" fill="#dfe1e5" stroke="#b0b4bb" stroke-width=".8"/><path d="M3 5h6M3 7.5h9M3 10h9" stroke="#c8c8c6" stroke-width="1"/><rect x="2" y="11.5" width="10" height="6" fill="#8c8f95" stroke="#6d7076" stroke-width=".6"/><path d="M3.5 13.5h7M3.5 15.5h5" stroke="#e6e6e6" stroke-width=".9"/><path d="M12 16.5l6.5-6.5 1.8 2-6.3 6.3-2.8.8z" fill="#a9aeb6" stroke="#6f747c" stroke-width=".8"/><path d="M14.5 9.5l5.5 6" stroke="#8b9098" stroke-width="1.4"/></svg>
<svg style="left:183px;top:829px" width="23" height="19" viewBox="0 0 23 19"><rect x=".6" y=".6" width="21.8" height="17.8" fill="#f7f9fb" stroke="#9fa5ae" stroke-width="1.2"/><rect x="1.2" y="1.2" width="20.6" height="2" fill="#cfd5dd"/><path d="M3.4 6l1.3 1.4 2.2-2.9M3.4 10l1.3 1.4 2.2-2.9M3.4 14l1.3 1.4 2.2-2.9" fill="none" stroke="#2f8aa8" stroke-width="1.5"/><path d="M9.5 6h9M9.5 10h9M9.5 14h9" stroke="#6c727b" stroke-width="1.3"/></svg>
<svg style="left:226px;top:826.5px" width="25" height="25" viewBox="0 0 25 25"><circle cx="12.5" cy="12.5" r="11.4" fill="none" stroke="#3d4450" stroke-width="1.5"/><path d="M10 8.3l6.3 4.2-6.3 4.2z" fill="none" stroke="#3d4450" stroke-width="1.4" stroke-linejoin="round"/></svg>
<svg style="left:269.5px;top:826.5px" width="25" height="25" viewBox="0 0 25 25"><path d="M5.6 21.3A11.4 11.4 0 1 0 2.2 17" fill="none" stroke="#3d4450" stroke-width="1.5"/><path d="M1.2 19.2l4.8 2.6-.3-5.2" fill="none" stroke="#3d4450" stroke-width="1.5" stroke-linejoin="round"/></svg>
<svg style="left:313.5px;top:827px" width="24" height="24" viewBox="0 0 24 24"><rect x="1.2" y="1.2" width="21.6" height="21.6" rx="2.6" fill="none" stroke="#3d4450" stroke-width="1.7"/><path d="M12 17.5V7M7.6 11.2L12 6.8l4.4 4.4" fill="none" stroke="#3d4450" stroke-width="1.6"/></svg>
<svg style="left:357px;top:827px" width="24" height="24" viewBox="0 0 24 24"><rect x="1.2" y="1.2" width="21.6" height="21.6" rx="2.6" fill="none" stroke="#3d4450" stroke-width="1.7"/><path d="M12 6.5V17M7.6 12.8L12 17.2l4.4-4.4" fill="none" stroke="#3d4450" stroke-width="1.6"/></svg>
<svg style="left:401px;top:829px" width="20" height="19" viewBox="0 0 20 19"><path d="M1 10L10 1.6 19 10M1 17.6L10 9.2l9 8.4" fill="none" stroke="#3d4450" stroke-width="1.5"/></svg>
<svg style="left:442px;top:829px" width="20" height="19" viewBox="0 0 20 19"><path d="M1 1.4L10 9.8 19 1.4M1 9L10 17.4 19 9" fill="none" stroke="#3d4450" stroke-width="1.5"/></svg>
<svg style="left:477px;top:827px" width="18" height="24" viewBox="0 0 18 24"><path d="M9 1.2C6.2 6.4 1.2 11 1.2 15.6a7.8 7.8 0 0 0 15.6 0C16.800 11 11.8 6.400 9 1.200z" fill="none" stroke="#3d4450" stroke-width="1.5"/><path d="M8.300 6.800C6.300 10.200 4 12.900 4 15.800c0 2.500 1.500 4.400 3.800 5" fill="none" stroke="#3d4450" stroke-width="1.100"/></svg>
<svg style="left:510px;top:827.5px" width="22" height="22" viewBox="0 0 22 22"><path d="M1 4.500l4-2.800v16l-4 1.300z" fill="#9a9a98" stroke="#7b7b79" stroke-width=".6"/><path d="M5 1.700h2.500v16.300H5z" fill="#c9c9c6"/><path d="M8.500 4l4.200-2.600 5 .3v16.500l-9.200 1.300z" fill="#aeadaa" stroke="#80807d" stroke-width=".6"/><path d="M12.700 1.400l5 .3v16.500h-5z" fill="#8d8c89"/><circle cx="13.200" cy="11.500" r="4.200" fill="#e8eef2" stroke="#8a8f96" stroke-width="1.300"/><path d="M16.300 14.800l4 4.500" stroke="#777c84" stroke-width="1.800"/></svg>
<svg style="left:553px;top:828px" width="19" height="22" viewBox="0 0 19 22"><path d="M3 1.500h9l5 5V21H3z" fill="#f3f3f1" stroke="#b7bac0" stroke-width="1"/><path d="M12 1.500v5h5z" fill="#dcdee2" stroke="#aeb2b9" stroke-width=".8"/><rect x="4.600" y="3" width="5" height="3.600" fill="#bfc2c7" stroke="#9fa3a9" stroke-width=".5"/><path d="M5 9h10M5 11.300h10M5 13.600h10M5 15.900h10M5 18.200h10" stroke="#b4b4b1" stroke-width="1"/><path d="M1.500 .5v4M-.5 2.500h4" stroke="#fff" stroke-width="1.200"/></svg>
<svg style="left:595.5px;top:826.5px" width="25" height="25" viewBox="0 0 25 25"><circle cx="12.500" cy="12.500" r="11.400" fill="none" stroke="#3d4450" stroke-width="1.500"/><path d="M8.200 8.200l8.600 8.600M16.800 8.200l-8.600 8.600" stroke="#3d4450" stroke-width="1.500"/></svg>
<div class="lbl" style="left:23px;top:855.8px">联机</div>
<div class="lbl" style="left:64px;top:855.8px">新建</div>
<div class="lbl" style="left:107px;top:855.8px">打开</div>
<div class="lbl" style="left:151px;top:855.8px">删除</div>
<div class="lbl" style="left:194.5px;top:855.8px">参数</div>
<div class="lbl" style="left:238.5px;top:855.8px">启动</div>
<div class="lbl" style="left:282px;top:855.8px">清零</div>
<div class="lbl" style="left:325.5px;top:855.8px">上升</div>
<div class="lbl" style="left:369px;top:855.8px">下压</div>
<div class="lbl" style="left:411px;top:855.8px">加水</div>
<div class="lbl" style="left:452px;top:855.8px">排水</div>
<div class="lbl" style="left:486px;top:855.8px">水滴</div>
<div class="lbl" style="left:521px;top:855.8px">查看</div>
<div class="lbl" style="left:563.5px;top:855.8px">报表</div>
<div class="lbl" style="left:608px;top:855.8px">退出</div>
<div class="a" style="left:-20px;top:884.5px;width:1454px;height:3.5px;background:linear-gradient(#d0e0f2,#8fb1d8 60%,#c5d8ef)"></div>
<div class="a" style="left:-20px;top:887px;width:1454px;height:59px;background:#e2eefc;border-bottom:1px solid #a9c3e6;box-sizing:border-box"></div><div class="a" style="left:0;top:887px;width:2px;height:59px;background:#b9cfee"></div>
<div class="t ser" style="left:10px;top:909.5px;font-size:21px;color:#1a1a1a">实时压力:</div>
<div class="t ser" style="left:294.5px;top:899.5px;font-size:35px;color:#000">100</div>
<div class="t ser" style="left:546.500px;top:910px;font-size:17px;letter-spacing:-.400px;color:#222">kPa</div>
<div class="t ser" style="left:605px;top:909.5px;font-size:21px;color:#1a1a1a">实时时间:</div>
<div class="t ser" style="left:881px;top:899.5px;font-size:35px;color:#000">113<span style="display:inline-block;width:17.500px">.</span>6</div>
<div class="t ser" style="left:1068px;top:909.3px;font-size:18px;color:#222">s</div>
<div class="a" style="left:1080px;top:888px;width:180px;height:58px;box-sizing:border-box;border:1px solid #a4a8b0;border-top:2px solid #9a9ea6;background:#e3eefc"></div>
<div class="t c" style="left:1169.5px;top:912.5px;font-size:10.500px;letter-spacing:.250px;color:#111">通讯方式--串口模式</div>
<div class="a" style="left:1263px;top:888px;width:151px;height:58px;background:linear-gradient(#d6e6fb,#bcd5f8 50%,#a9caf6)"></div>
<div class="t c" style="left:1337.500px;top:908px;font-size:9px;color:#111;text-align:center;line-height:9px">当前试验方法<br>增压法</div>
<div class="a" style="left:-20px;top:946px;width:1454px;height:4px;background:#e4edfa"></div>
<div class="a" style="left:-20px;top:950px;width:1454px;height:485px;background:#d5effe"></div>
<div class="a" style="left:152px;top:988.5px;width:1188px;height:392.5px;background:#7f858c"></div>
<div class="a" style="left:157px;top:991px;width:1183px;height:390px;background:linear-gradient(108.270deg,#87ceeb,#00000c)"></div>
<svg style="left:0;top:0" width="1414" height="1549" viewBox="0 0 1414 1549">
<path d="M157 1039.3H1340" stroke="#fff" stroke-opacity=".2" stroke-width="1.400"/>
<path d="M157 1088.2H1340" stroke="#fff" stroke-opacity=".2" stroke-width="1.400"/>
<path d="M157 1137.0H1340" stroke="#fff" stroke-opacity=".2" stroke-width="1.400"/>
<path d="M157 1185.9H1340" stroke="#fff" stroke-opacity=".2" stroke-width="1.400"/>
<path d="M157 1234.8H1340" stroke="#fff" stroke-opacity=".2" stroke-width="1.400"/>
<path d="M157 1283.6H1340" stroke="#fff" stroke-opacity=".2" stroke-width="1.400"/>
<path d="M157 1332.5H1340" stroke="#fff" stroke-opacity=".2" stroke-width="1.400"/>
<path d="M303.6 991V1381" stroke="#fff" stroke-opacity=".2" stroke-width="1.400"/>
<path d="M451.7 991V1381" stroke="#fff" stroke-opacity=".2" stroke-width="1.400"/>
<path d="M599.8 991V1381" stroke="#fff" stroke-opacity=".2" stroke-width="1.400"/>
<path d="M747.9 991V1381" stroke="#fff" stroke-opacity=".2" stroke-width="1.400"/>
<path d="M896.0 991V1381" stroke="#fff" stroke-opacity=".2" stroke-width="1.400"/>
<path d="M1044.1 991V1381" stroke="#fff" stroke-opacity=".2" stroke-width="1.400"/>
<path d="M1192.2 991V1381" stroke="#fff" stroke-opacity=".2" stroke-width="1.400"/>
<path d="M146 990.5H152" stroke="#555b63" stroke-width="1.300"/>
<path d="M149 1000.3H152" stroke="#555b63" stroke-width="1.300"/>
<path d="M149 1010.0H152" stroke="#555b63" stroke-width="1.300"/>
<path d="M149 1019.8H152" stroke="#555b63" stroke-width="1.300"/>
<path d="M149 1029.6H152" stroke="#555b63" stroke-width="1.300"/>
<path d="M146 1039.3H152" stroke="#555b63" stroke-width="1.300"/>
<path d="M149 1049.1H152" stroke="#555b63" stroke-width="1.300"/>
<path d="M149 1058.9H152" stroke="#555b63" stroke-width="1.300"/>
<path d="M149 1068.7H152" stroke="#555b63" stroke-width="1.300"/>
<path d="M149 1078.4H152" stroke="#555b63" stroke-width="1.300"/>
<path d="M146 1088.2H152" stroke="#555b63" stroke-width="1.300"/>
<path d="M149 1098.0H152" stroke="#555b63" stroke-width="1.300"/>
<path d="M149 1107.7H152" stroke="#555b63" stroke-width="1.300"/>
<path d="M149 1117.5H152" stroke="#555b63" stroke-width="1.300"/>
<path d="M149 1127.3H152" stroke="#555b63" stroke-width="1.300"/>
<path d="M146 1137.0H152" stroke="#555b63" stroke-width="1.300"/>
<path d="M149 1146.8H152" stroke="#555b63" stroke-width="1.300"/>
<path d="M149 1156.6H152" stroke="#555b63" stroke-width="1.300"/>
<path d="M149 1166.4H152" stroke="#555b63" stroke-width="1.300"/>
<path d="M149 1176.1H152" stroke="#555b63" stroke-width="1.300"/>
<path d="M146 1185.9H152" stroke="#555b63" stroke-width="1.300"/>
<path d="M149 1195.7H152" stroke="#555b63" stroke-width="1.300"/>
<path d="M149 1205.4H152" stroke="#555b63" stroke-width="1.300"/>
<path d="M149 1215.2H152" stroke="#555b63" stroke-width="1.300"/>
<path d="M149 1225.0H152" stroke="#555b63" stroke-width="1.300"/>
<path d="M146 1234.8H152" stroke="#555b63" stroke-width="1.300"/>
<path d="M149 1244.5H152" stroke="#555b63" stroke-width="1.300"/>
<path d="M149 1254.3H152" stroke="#555b63" stroke-width="1.300"/>
<path d="M149 1264.1H152" stroke="#555b63" stroke-width="1.300"/>
<path d="M149 1273.8H152" stroke="#555b63" stroke-width="1.300"/>
<path d="M146 1283.6H152" stroke="#555b63" stroke-width="1.300"/>
<path d="M149 1293.4H152" stroke="#555b63" stroke-width="1.300"/>
<path d="M149 1303.1H152" stroke="#555b63" stroke-width="1.300"/>
<path d="M149 1312.9H152" stroke="#555b63" stroke-width="1.300"/>
<path d="M149 1322.7H152" stroke="#555b63" stroke-width="1.300"/>
<path d="M146 1332.5H152" stroke="#555b63" stroke-width="1.300"/>
<path d="M149 1342.2H152" stroke="#555b63" stroke-width="1.300"/>
<path d="M149 1352.0H152" stroke="#555b63" stroke-width="1.300"/>
<path d="M149 1361.8H152" stroke="#555b63" stroke-width="1.300"/>
<path d="M149 1371.5H152" stroke="#555b63" stroke-width="1.300"/>
<path d="M146 1381.3H152" stroke="#555b63" stroke-width="1.300"/>
<path d="M154 1382.200H1340" stroke="#f2f6fa" stroke-width="1.600"/>
<path d="M155 1384.300H1341" stroke="#6d6dfb" stroke-width="2"/>
<path d="M155.5 1384V1389" stroke="#6d6dfb" stroke-width="1.400"/>
<path d="M185.1 1384V1387.5" stroke="#6d6dfb" stroke-width="1.400"/>
<path d="M214.7 1384V1387.5" stroke="#6d6dfb" stroke-width="1.400"/>
<path d="M244.4 1384V1387.5" stroke="#6d6dfb" stroke-width="1.400"/>
<path d="M274.0 1384V1387.5" stroke="#6d6dfb" stroke-width="1.400"/>
<path d="M303.6 1384V1389" stroke="#6d6dfb" stroke-width="1.400"/>
<path d="M333.2 1384V1387.5" stroke="#6d6dfb" stroke-width="1.400"/>
<path d="M362.8 1384V1387.5" stroke="#6d6dfb" stroke-width="1.400"/>
<path d="M392.5 1384V1387.5" stroke="#6d6dfb" stroke-width="1.400"/>
<path d="M422.1 1384V1387.5" stroke="#6d6dfb" stroke-width="1.400"/>
<path d="M451.7 1384V1389" stroke="#6d6dfb" stroke-width="1.400"/>
<path d="M481.3 1384V1387.5" stroke="#6d6dfb" stroke-width="1.400"/>
<path d="M510.9 1384V1387.5" stroke="#6d6dfb" stroke-width="1.400"/>
<path d="M540.6 1384V1387.5" stroke="#6d6dfb" stroke-width="1.400"/>
<path d="M570.2 1384V1387.5" stroke="#6d6dfb" stroke-width="1.400"/>
<path d="M599.8 1384V1389" stroke="#6d6dfb" stroke-width="1.400"/>
<path d="M629.4 1384V1387.5" stroke="#6d6dfb" stroke-width="1.400"/>
<path d="M659.0 1384V1387.5" stroke="#6d6dfb" stroke-width="1.400"/>
<path d="M688.7 1384V1387.5" stroke="#6d6dfb" stroke-width="1.400"/>
<path d="M718.3 1384V1387.5" stroke="#6d6dfb" stroke-width="1.400"/>
<path d="M747.9 1384V1389" stroke="#6d6dfb" stroke-width="1.400"/>
<path d="M777.5 1384V1387.5" stroke="#6d6dfb" stroke-width="1.400"/>
<path d="M807.1 1384V1387.5" stroke="#6d6dfb" stroke-width="1.400"/>
<path d="M836.8 1384V1387.5" stroke="#6d6dfb" stroke-width="1.400"/>
<path d="M866.4 1384V1387.5" stroke="#6d6dfb" stroke-width="1.400"/>
<path d="M896.0 1384V1389" stroke="#6d6dfb" stroke-width="1.400"/>
<path d="M925.6 1384V1387.5" stroke="#6d6dfb" stroke-width="1.400"/>
<path d="M955.2 1384V1387.5" stroke="#6d6dfb" stroke-width="1.400"/>
<path d="M984.9 1384V1387.5" stroke="#6d6dfb" stroke-width="1.400"/>
<path d="M1014.5 1384V1387.5" stroke="#6d6dfb" stroke-width="1.400"/>
<path d="M1044.1 1384V1389" stroke="#6d6dfb" stroke-width="1.400"/>
<path d="M1073.7 1384V1387.5" stroke="#6d6dfb" stroke-width="1.400"/>
<path d="M1103.3 1384V1387.5" stroke="#6d6dfb" stroke-width="1.400"/>
<path d="M1133.0 1384V1387.5" stroke="#6d6dfb" stroke-width="1.400"/>
<path d="M1162.6 1384V1387.5" stroke="#6d6dfb" stroke-width="1.400"/>
<path d="M1192.2 1384V1389" stroke="#6d6dfb" stroke-width="1.400"/>
<path d="M1221.8 1384V1387.5" stroke="#6d6dfb" stroke-width="1.400"/>
<path d="M1251.4 1384V1387.5" stroke="#6d6dfb" stroke-width="1.400"/>
<path d="M1281.1 1384V1387.5" stroke="#6d6dfb" stroke-width="1.400"/>
<path d="M1310.7 1384V1387.5" stroke="#6d6dfb" stroke-width="1.400"/>
<path d="M1340.3 1384V1389" stroke="#6d6dfb" stroke-width="1.400"/>
<path d="M145.500 987.500l4.500 2.500-4.500 2.500z" fill="#e0a890"/><path d="M145.500 1380l4.500 2.500-4.500 2.500z" fill="#e0a890"/><path d="M153 1390l2.500-4.500 2.500 4.500z" fill="#e0a890"/><path d="M1338 1384l2.500-4 2.500 4z" fill="#e0a890"/>
</svg>
<div class="t c n" style="left:131px;top:986.3px;font-size:8.500px;color:#2a2a2a">100.0</div>
<div class="t c n" style="left:131px;top:1035.1px;font-size:8.500px;color:#2a2a2a">87.5</div>
<div class="t c n" style="left:131px;top:1084.0px;font-size:8.500px;color:#2a2a2a">75.0</div>
<div class="t c n" style="left:131px;top:1132.8px;font-size:8.500px;color:#2a2a2a">62.5</div>
<div class="t c n" style="left:131px;top:1181.7px;font-size:8.500px;color:#2a2a2a">50.0</div>
<div class="t c n" style="left:131px;top:1230.5px;font-size:8.500px;color:#2a2a2a">37.5</div>
<div class="t c n" style="left:131px;top:1279.4px;font-size:8.500px;color:#2a2a2a">25.0</div>
<div class="t c n" style="left:131px;top:1328.2px;font-size:8.500px;color:#2a2a2a">12.5</div>
<div class="t c n" style="left:131px;top:1377.1px;font-size:8.500px;color:#2a2a2a">0.0</div>
<div class="t c n" style="left:155.5px;top:1393.500px;font-size:9px;color:#45b060">0</div>
<div class="t c n" style="left:303.6px;top:1393.500px;font-size:9px;color:#45b060">38</div>
<div class="t c n" style="left:451.7px;top:1393.500px;font-size:9px;color:#45b060">75</div>
<div class="t c n" style="left:599.8px;top:1393.500px;font-size:9px;color:#45b060">113</div>
<div class="t c n" style="left:747.9px;top:1393.500px;font-size:9px;color:#45b060">150</div>
<div class="t c n" style="left:896.0px;top:1393.500px;font-size:9px;color:#45b060">188</div>
<div class="t c n" style="left:1044.1px;top:1393.500px;font-size:9px;color:#45b060">225</div>
<div class="t c n" style="left:1192.2px;top:1393.500px;font-size:9px;color:#45b060">263</div>
<div class="t c n" style="left:1340.3px;top:1393.500px;font-size:9px;color:#45b060">300</div>
<div class="a" style="left:-20px;top:1432.0px;width:1454px;height:3.300px;background:linear-gradient(#bcd5f8,#9fc0ee 60%,#7fa2d2)"></div>
<div class="a" style="left:-20px;top:1435.3px;width:1454px;height:14.3px;background:linear-gradient(#e2edfc,#c8ddf9 45%,#b0cdf5)"></div>
<div class="a" style="left:0;top:1435.3px;width:2px;height:14.3px;background:#9dbbe6"></div>
<div class="t" style="left:4.200px;top:1437.8px;font-size:8.800px;color:#2f5aa6">结果值</div>
<svg style="left:1400.500px;top:1437.8px" width="7" height="9" viewBox="0 0 7 9"><path d="M2 1h3v4H2zM.8 5h5.400M3.500 5v3.500" fill="none" stroke="#23406f" stroke-width="1.100"/><path d="M4.300 1v4" stroke="#23406f" stroke-width="1"/></svg>
<div class="a" style="left:-20px;top:1449.6px;width:1454px;height:81.2px;background:#d5e4fa"></div>
<div class="a" style="left:2px;top:1453.8px;width:1408.500px;height:73.7px;box-sizing:border-box;border-top:1.500px solid #8d9298;border-left:1.700px solid #90969e;border-right:1px solid #c5d3ea;border-bottom:1px solid #c5d3ea;background:#e7eefa"></div>
<div class="cell" style="left:4.2px;top:1455.3px;width:57.3px;height:14px;line-height:13.5px">序号</div>
<div class="cell" style="left:61.5px;top:1455.3px;width:26.8px;height:14px;line-height:13.5px"><b>压强</b></div>
<div class="cell" style="left:88.3px;top:1455.3px;width:28.0px;height:14px;line-height:13.5px"><b>时间</b></div>
<div class="cell" style="left:116.3px;top:1455.3px;width:45.7px;height:14px;line-height:13.5px">停止时间</div>
<div class="cell" style="left:4.2px;top:1469.3px;width:57.3px;height:14px;line-height:13.5px"><b>单位</b></div>
<div class="cell" style="left:61.5px;top:1469.3px;width:26.8px;height:14px;line-height:13.5px"><span style="font-size:7px">kPa</span></div>
<div class="cell" style="left:88.3px;top:1469.3px;width:28.0px;height:14px;line-height:13.5px"><span style="font-size:7px">s</span></div>
<div class="cell" style="left:116.3px;top:1469.3px;width:45.7px;height:14px;line-height:13.5px"><span style="font-size:7px">s</span></div>
<div class="a" style="left:61.5px;top:1469.3px;width:26.8px;height:14px;background:#fdfdfd"></div>
<div class="t c" style="left:74.9px;top:1473.3px;font-size:7px">kPa</div>
<div class="a" style="left:88.3px;top:1469.3px;width:28.0px;height:14px;background:#a6cffa"></div>
<div class="t c" style="left:102.3px;top:1473.3px;font-size:7px;color:#1a3a70">s</div>
<div class="a" style="left:61.0px;top:1468.8px;width:55.8px;height:15px;box-sizing:border-box;border:1.600px solid #3d434c;border-radius:1.500px"></div>
<div class="a" style="left:-20px;top:1529.8px;width:1454px;height:30px;background:linear-gradient(#dbe8fc,#c3daf8 50%,#b0ccf5 100%);border-top:1px solid #a9c4ea;box-sizing:border-box"></div>
<div class="a" style="left:-20px;top:1545.500px;width:1454px;height:10px;background:#b4cff6"></div>
<div class="a" style="left:5.5px;top:1530.7px;width:32.3px;height:14.8px;background:linear-gradient(#f3f7fe,#ffffff 40%)"></div>
<div class="t c" style="left:21.6px;top:1533.6px;font-size:8.800px;color:#3a64ad">结果值</div>
<div class="a" style="left:40.7px;top:1531.2px;width:31.9px;height:14.3px;box-sizing:border-box;border:1px solid #a4bfe4;border-top:none;background:linear-gradient(#dfeafb,#cfe0f9)"></div>
<div class="t c" style="left:56.6px;top:1533.6px;font-size:8.800px;color:#2c4f93">统计值</div>
</div></div>
</body></html>
